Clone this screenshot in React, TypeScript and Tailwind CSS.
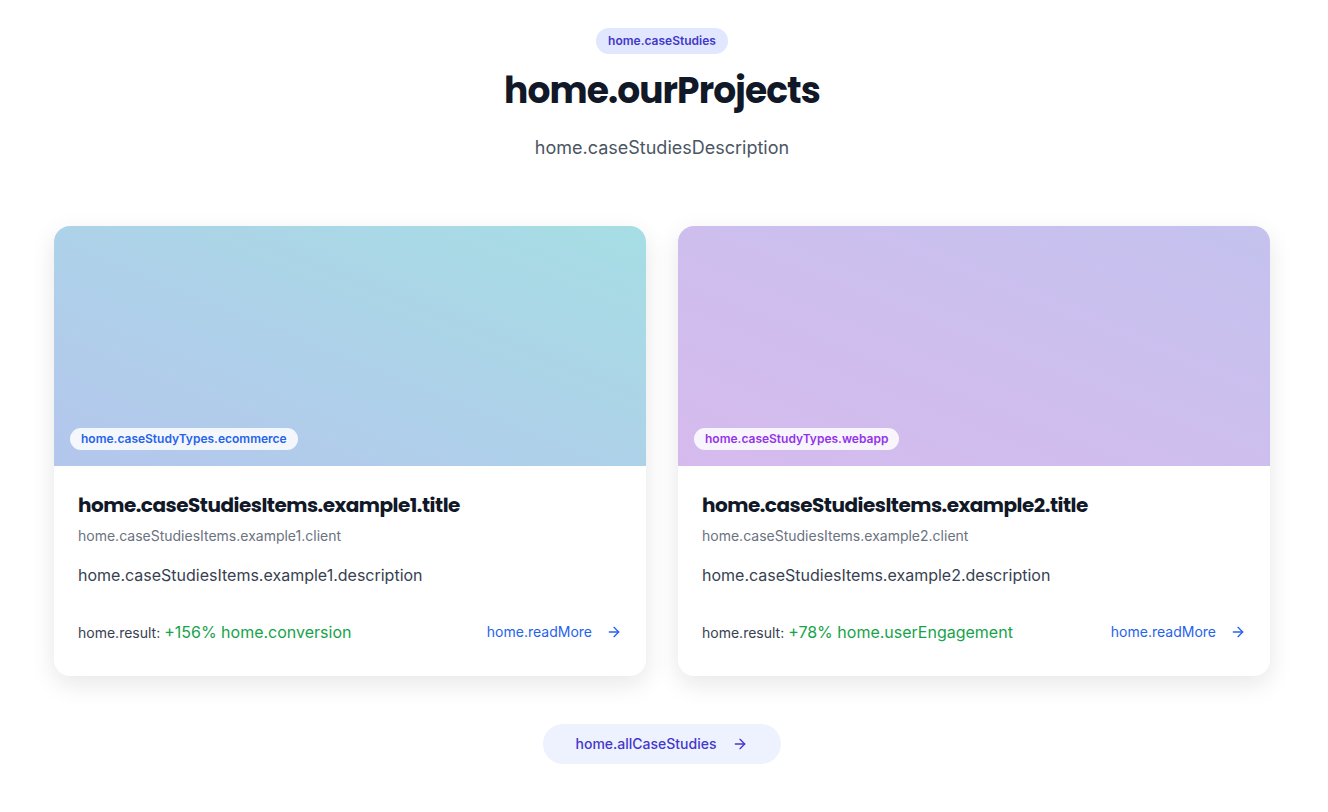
import { ArrowRight } from 'lucide-react'

interface CaseStudy {
  type: string
  typeColor: string
  gradient: string
  title: string
  client: string
  description: string
  resultValue: string
}

const items: CaseStudy[] = [
  {
    type: 'home.caseStudyTypes.ecommerce',
    typeColor: 'text-[#2563eb]',
    gradient: 'bg-gradient-to-tr from-[#b4c6ed] to-[#a6dee4]',
    title: 'home.caseStudiesItems.example1.title',
    client: 'home.caseStudiesItems.example1.client',
    description: 'home.caseStudiesItems.example1.description',
    resultValue: '+156% home.conversion',
  },
  {
    type: 'home.caseStudyTypes.webapp',
    typeColor: 'text-[#9333ea]',
    gradient: 'bg-gradient-to-tr from-[#d6baee] to-[#c4c2ee]',
    title: 'home.caseStudiesItems.example2.title',
    client: 'home.caseStudiesItems.example2.client',
    description: 'home.caseStudiesItems.example2.description',
    resultValue: '+78% home.userEngagement',
  },
]

const heading = { fontFamily: 'Poppins, Inter, "Liberation Sans", sans-serif' }

function Card({ item }: { item: CaseStudy }) {
  return (
    <div className="bg-white rounded-2xl overflow-hidden shadow-[0_8px_24px_rgba(15,23,42,0.10)]">
      <div className={`relative h-60 ${item.gradient}`}>
        <span
          className={`absolute left-4 bottom-4 bg-white/85 rounded-full px-[11px] py-[3px] text-xs font-semibold ${item.typeColor}`}
        >
          {item.type}
        </span>
      </div>
      <div className="px-6 pt-[25px] pb-[32px]">
        <h3 className="text-xl font-bold text-[#111827] tracking-[-0.025em]" style={heading}>
          {item.title}
        </h3>
        <p className="mt-[7px] text-sm text-[#6b7280]">{item.client}</p>
        <p className="mt-[17px] text-base text-[#374151]">{item.description}</p>
        <div className="mt-[33px] flex items-center justify-between">
          <div className="text-sm text-[#374151]">
            home.result: <span className="text-base text-[#16a34a]">{item.resultValue}</span>
          </div>
          <a className="flex items-center gap-[14px] text-sm text-[#2563eb]">
            home.readMore
            <ArrowRight size={16} strokeWidth={2} />
          </a>
        </div>
      </div>
    </div>
  )
}

export default function App() {
  return (
    <div
      className="min-h-[812px] bg-white"
      style={{ fontFamily: 'Inter, "Liberation Sans", sans-serif' }}
    >
      <section className="w-[1324px] pt-7 pb-12">
        <div className="flex flex-col items-center">
          <span className="bg-[#e0e7ff] text-[#4338ca] text-xs font-semibold rounded-full px-3 py-[5px]">
            home.caseStudies
          </span>
          <h2
            className="mt-[15px] text-[36px] leading-[44px] font-bold text-[#111827] tracking-[-0.025em]"
            style={heading}
          >
            home.ourProjects
          </h2>
          <p className="mt-[21px] text-lg text-[#4b5563]">home.caseStudiesDescription</p>
        </div>

        <div className="mt-[64px] w-[1216px] mx-auto grid grid-cols-2 gap-8">
          {items.map(it => (
            <Card key={it.title} item={it} />
          ))}
        </div>

        <div className="mt-12 flex justify-center">
          <button className="flex items-center gap-4 bg-[#eef2ff] text-[#4338ca] text-sm font-medium rounded-full px-[33px] h-10">
            home.allCaseStudies
            <ArrowRight size={16} strokeWidth={2} />
          </button>
        </div>
      </section>
    </div>
  )
}
